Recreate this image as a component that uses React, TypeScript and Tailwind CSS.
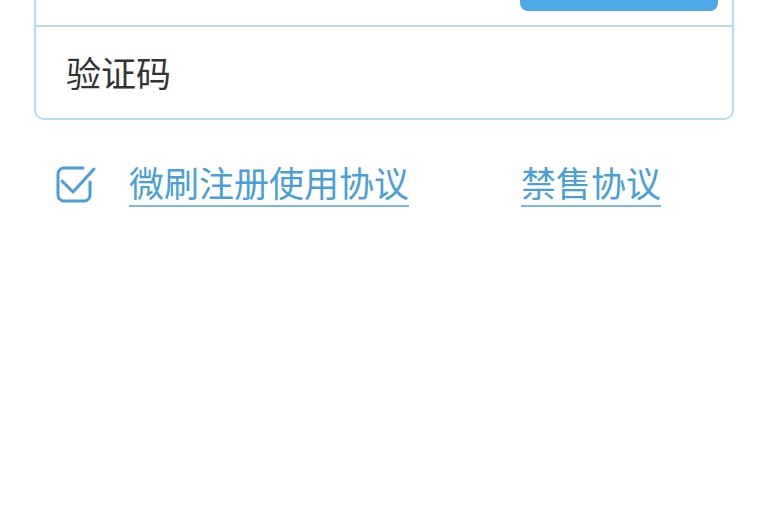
import React, { useState } from 'react';

const CheckIcon = () => (
  <svg width="44" height="40" viewBox="0 0 44 40" fill="none" stroke="#4a9fd8" strokeWidth="3" strokeLinecap="round" strokeLinejoin="round">
    <path d="M30 10 H11 a6 6 0 0 0 -6 6 V37 a6 6 0 0 0 6 6 H31 a6 6 0 0 0 6 -6 V24" transform="translate(0,-5)" />
    <path d="M9 18 L20 29 L41 6" />
  </svg>
);

export default function App() {
  const [code, setCode] = useState('');

  return (
    <div className="w-[768px] h-[510px] overflow-hidden bg-white" style={{ fontFamily: '"Noto Sans CJK SC", "Noto Sans", sans-serif' }}>
      <div className="mx-[34px] -mt-[70px] rounded-[10px] border-2 border-[#b8dcef] bg-white">
        <div className="h-[95px] flex items-center justify-end pr-[14px] border-b-2 border-[#c2d9e6]">
          <button aria-label="获取验证码" className="w-[198px] h-[65px] rounded-[8px] bg-[#4fa9e6]" />
        </div>
        <div className="h-[91px] flex items-center pl-[30px]">
          <input
            value={code}
            onChange={(e) => setCode(e.target.value)}
            placeholder="验证码"
            className="w-full outline-none text-[35px] text-[#333] placeholder:text-[#333] bg-transparent"
          />
        </div>
      </div>

      <div className="flex items-center mt-[39px] pl-[53px]">
        <CheckIcon />
        <a className="ml-[32px] text-[35px] leading-[46px] text-[#4a9fd8] border-b-2 border-[#7ab9e4]">微刷注册使用协议</a>
        <a className="ml-[112px] text-[35px] leading-[46px] text-[#4a9fd8] border-b-2 border-[#7ab9e4]">禁售协议</a>
      </div>
    </div>
  );
}
